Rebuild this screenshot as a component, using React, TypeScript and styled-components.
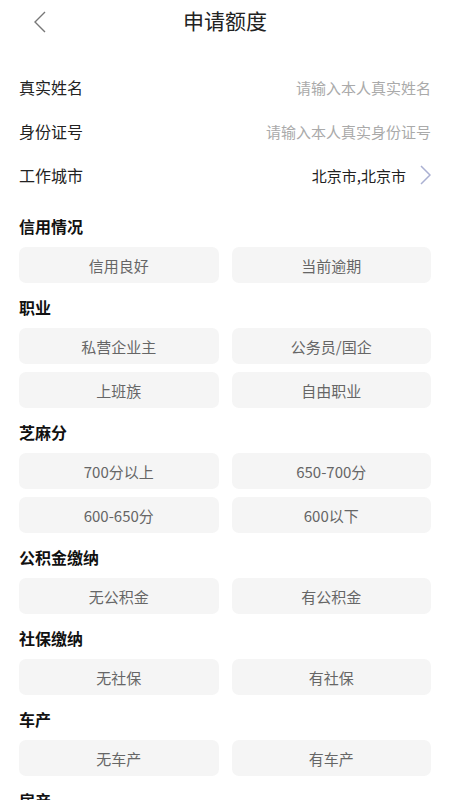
import React from 'react';
import styled, { createGlobalStyle } from 'styled-components';

const GlobalStyle = createGlobalStyle`
  html, body {
    margin: 0;
    padding: 0;
    background: #ffffff;
  }
  body {
    font-family: 'Noto Sans CJK SC', 'Noto Sans', sans-serif;
    color: #222;
  }
`;

const sections = [
  { title: '信用情况', options: ['信用良好', '当前逾期'] },
  { title: '职业', options: ['私营企业主', '公务员/国企', '上班族', '自由职业'] },
  { title: '芝麻分', options: ['700分以上', '650-700分', '600-650分', '600以下'] },
  { title: '公积金缴纳', options: ['无公积金', '有公积金'] },
  { title: '社保缴纳', options: ['无社保', '有社保'] },
  { title: '车产', options: ['无车产', '有车产'] },
  { title: '房产', options: ['无房产', '有房产'] },
];

export default function App() {
  return (
    <>
      <GlobalStyle />
      <Page>
        <Header>
          <BackButton>
            <svg width="14" height="22" viewBox="0 0 14 22">
              <path d="M12 1 L2 11 L12 21" fill="none" stroke="#777" strokeWidth="1.4" />
            </svg>
          </BackButton>
          <Title>申请额度</Title>
        </Header>

        <Form>
          <Row>
            <Label>真实姓名</Label>
            <Input placeholder="请输入本人真实姓名" />
          </Row>
          <Row>
            <Label>身份证号</Label>
            <Input placeholder="请输入本人真实身份证号" />
          </Row>
          <Row>
            <Label>工作城市</Label>
            <CityValue>
              北京市,北京市
              <svg width="11" height="20" viewBox="0 0 11 20">
                <path d="M1 1 L10 10 L1 19" fill="none" stroke="#aab0d2" strokeWidth="1.5" />
              </svg>
            </CityValue>
          </Row>
        </Form>

        {sections.map((s) => (
          <Section key={s.title}>
            <SectionTitle>{s.title}</SectionTitle>
            <OptionGrid>
              {s.options.map((o) => (
                <Option key={o}>{o}</Option>
              ))}
            </OptionGrid>
          </Section>
        ))}
      </Page>
    </>
  );
}

const Page = styled.div`
  width: 450px;
  min-height: 800px;
  background: #fff;
`;

const Header = styled.div`
  position: relative;
  height: 44px;
  display: flex;
  align-items: center;
  justify-content: center;
`;

const BackButton = styled.div`
  position: absolute;
  left: 33px;
  top: 11px;
  width: 14px;
  height: 22px;
`;

const Title = styled.h1`
  margin: 0 0 4px;
  font-size: 21px;
  font-weight: 400;
  color: #222;
`;

const Form = styled.div`
  padding: 21px 19px 0;
`;

const Row = styled.div`
  height: 44px;
  display: flex;
  align-items: center;
  justify-content: space-between;
`;

const Label = styled.span`
  font-size: 16px;
  color: #222;
`;

const Input = styled.input`
  border: none;
  outline: none;
  background: transparent;
  text-align: right;
  font-family: inherit;
  font-size: 15px;
  color: #333;
  width: 220px;
  padding: 0;

  &::placeholder {
    color: #aaa;
  }
`;

const CityValue = styled.span`
  display: flex;
  align-items: center;
  gap: 14px;
  font-size: 15px;
  color: #222;
`;

const Section = styled.div`
  padding: 17px 19px 0;

  & + & {
    padding-top: 12px;
  }
`;

const SectionTitle = styled.div`
  height: 24px;
  line-height: 24px;
  font-size: 16px;
  font-weight: 700;
  color: #111;
  margin-bottom: 9px;
`;

const OptionGrid = styled.div`
  display: grid;
  grid-template-columns: 1fr 1fr;
  column-gap: 13px;
  row-gap: 8px;
`;

const Option = styled.div`
  height: 36px;
  border-radius: 7px;
  background: #f5f5f5;
  display: flex;
  align-items: center;
  justify-content: center;
  font-size: 15px;
  color: #666;
`;
